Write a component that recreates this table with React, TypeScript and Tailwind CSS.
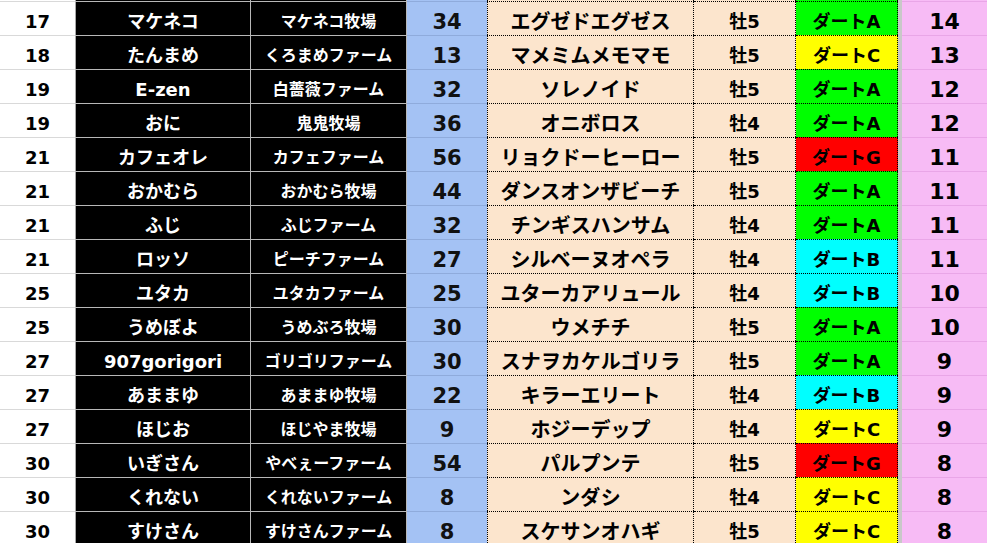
import React from 'react';

type Row = {
  rank: string;
  owner: string;
  farm: string;
  pt: string;
  horse: string;
  sex: string;
  cls: string;
  score: string;
};

const rows: Row[] = [
  { rank: '17', owner: 'マケネコ', farm: 'マケネコ牧場', pt: '34', horse: 'エグゼドエグゼス', sex: '牡5', cls: 'A', score: '14' },
  { rank: '18', owner: 'たんまめ', farm: 'くろまめファーム', pt: '13', horse: 'マメミムメモマモ', sex: '牡5', cls: 'C', score: '13' },
  { rank: '19', owner: 'E-zen', farm: '白薔薇ファーム', pt: '32', horse: 'ソレノイド', sex: '牡5', cls: 'A', score: '12' },
  { rank: '19', owner: 'おに', farm: '鬼鬼牧場', pt: '36', horse: 'オニボロス', sex: '牡4', cls: 'A', score: '12' },
  { rank: '21', owner: 'カフェオレ', farm: 'カフェファーム', pt: '56', horse: 'リョクドーヒーロー', sex: '牡5', cls: 'G', score: '11' },
  { rank: '21', owner: 'おかむら', farm: 'おかむら牧場', pt: '44', horse: 'ダンスオンザビーチ', sex: '牡5', cls: 'A', score: '11' },
  { rank: '21', owner: 'ふじ', farm: 'ふじファーム', pt: '32', horse: 'チンギスハンサム', sex: '牡4', cls: 'A', score: '11' },
  { rank: '21', owner: 'ロッソ', farm: 'ピーチファーム', pt: '27', horse: 'シルベーヌオペラ', sex: '牡4', cls: 'B', score: '11' },
  { rank: '25', owner: 'ユタカ', farm: 'ユタカファーム', pt: '25', horse: 'ユターカアリュール', sex: '牡4', cls: 'B', score: '10' },
  { rank: '25', owner: 'うめぼよ', farm: 'うめぶろ牧場', pt: '30', horse: 'ウメチチ', sex: '牡5', cls: 'A', score: '10' },
  { rank: '27', owner: '907gorigori', farm: 'ゴリゴリファーム', pt: '30', horse: 'スナヲカケルゴリラ', sex: '牡5', cls: 'A', score: '9' },
  { rank: '27', owner: 'あままゆ', farm: 'あままゆ牧場', pt: '22', horse: 'キラーエリート', sex: '牡4', cls: 'B', score: '9' },
  { rank: '27', owner: 'ほじお', farm: 'ほじやま牧場', pt: '9', horse: 'ホジーデップ', sex: '牡4', cls: 'C', score: '9' },
  { rank: '30', owner: 'いぎさん', farm: 'やべぇーファーム', pt: '54', horse: 'パルプンテ', sex: '牡5', cls: 'G', score: '8' },
  { rank: '30', owner: 'くれない', farm: 'くれないファーム', pt: '8', horse: 'ンダシ', sex: '牡4', cls: 'C', score: '8' },
  { rank: '30', owner: 'すけさん', farm: 'すけさんファーム', pt: '8', horse: 'スケサンオハギ', sex: '牡5', cls: 'C', score: '8' },
];

const classBg: Record<string, string> = {
  A: 'bg-[#00ff00]',
  B: 'bg-[#00ffff]',
  C: 'bg-[#ffff00]',
  G: 'bg-[#ff0000]',
};

function SheetRow({ r, stub }: { r?: Row; stub?: boolean }) {
  const h = stub ? 'h-px' : 'h-[34px]';
  const top = stub ? '' : 'border-t';
  const cell = stub
    ? `flex leading-none font-bold ${h}`
    : `flex items-center justify-center pt-[7px] leading-none font-bold ${h}`;
  return (
    <div className="flex">
      <div className={`${cell} w-[76px] shrink-0 border-r border-r-[#a8a8a8] bg-white text-[18px] text-black ${top} border-t-[#d9d9d9]`}>
        {r?.rank}
      </div>
      <div className={`${cell} w-[175px] shrink-0 border-r border-r-[#b8b8b8] bg-black text-[18px] text-white ${top} border-t-[#b8b8b8]`}>
        {r?.owner}
      </div>
      <div className={`${cell} w-[156px] shrink-0 border-r border-r-[#b8b8b8] bg-black text-[16px] text-white ${top} border-t-[#b8b8b8]`}>
        {r?.farm}
      </div>
      <div className={`${cell} w-[80px] shrink-0 bg-[#a4c2f4] text-[21px] text-[#111] ${top} border-t-[#8fabdc]`}>
        {r?.pt}
      </div>
      <div className={`${cell} w-[207px] shrink-0 border-x border-dotted border-x-black bg-[#fce5cd] text-[20px] text-black ${top} border-t-black`}>
        {r?.horse}
      </div>
      <div className={`${cell} w-[102px] shrink-0 border-r border-dotted border-r-black bg-[#fce5cd] text-[18px] text-black ${top} border-t-black`}>
        {r?.sex}
      </div>
      <div className={`${cell} w-[102px] shrink-0 border-r border-dotted border-r-black ${r ? classBg[r.cls] : 'bg-[#00ff00]'} text-[18px] text-black ${top} border-t-black`}>
        {r ? `ダート${r.cls}` : ''}
      </div>
      <div className={`w-[4px] shrink-0 bg-[#c8c8c8] ${h}`} />
      <div className={`${cell} flex-1 bg-[#f7bbf5] text-[22px] text-black ${top} border-t-[#e9a6e7]`}>
        {r?.score}
      </div>
    </div>
  );
}

export default function App() {
  return (
    <div className="h-[543px] w-[987px] overflow-hidden bg-white font-['DejaVu_Sans','Noto_Sans_CJK_JP',sans-serif]">
      <SheetRow stub />
      {rows.map((r, i) => (
        <SheetRow key={i} r={r} />
      ))}
    </div>
  );
}
